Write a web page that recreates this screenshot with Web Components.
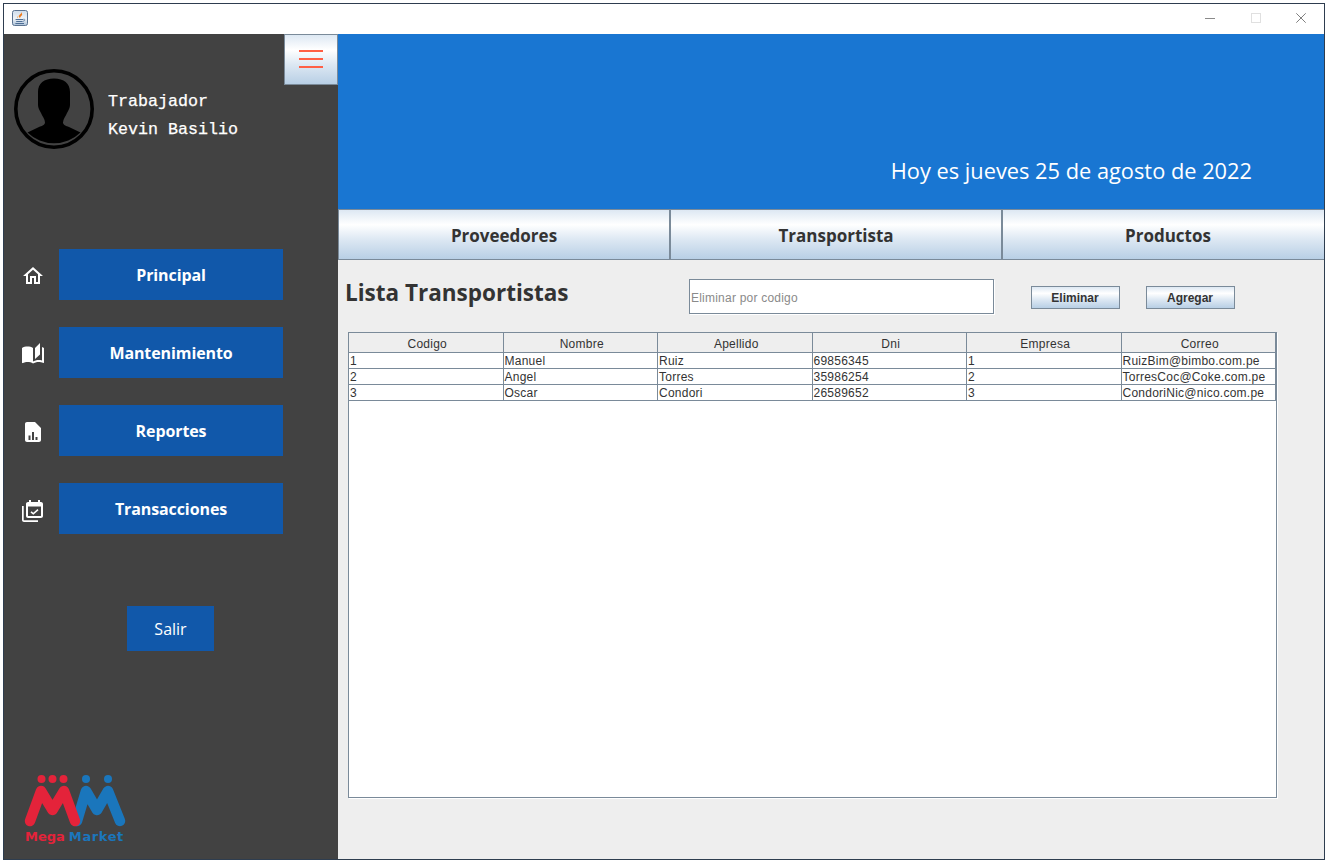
<!DOCTYPE html>
<html lang="es">
<head>
<meta charset="utf-8">
<title>Mega Market</title>
<style>
  html, body { margin: 0; padding: 0; background: #fff; }
  body { padding: 3px 0 0 3px; width: 1325px; height: 860px; box-sizing: border-box; overflow: hidden; }
</style>
</head>
<body>
<app-window>
  <title-bar slot="title"></title-bar>
  <side-bar slot="side">
    <user-profile role-name="Trabajador" user-name="Kevin Basilio"></user-profile>
    <nav-list>
      <nav-item label="Principal" icon="home"></nav-item>
      <nav-item label="Mantenimiento" icon="book"></nav-item>
      <nav-item label="Reportes" icon="report"></nav-item>
      <nav-item label="Transacciones" icon="cal"></nav-item>
    </nav-list>
    <exit-button>Salir</exit-button>
    <brand-logo></brand-logo>
  </side-bar>
  <main-panel slot="main">
    <date-banner>Hoy es jueves 25 de agosto de 2022</date-banner>
    <tab-bar>
      <ocean-button kind="tab">Proveedores</ocean-button>
      <ocean-button kind="tab">Transportista</ocean-button>
      <ocean-button kind="tab">Productos</ocean-button>
    </tab-bar>
    <list-view heading="Lista Transportistas" placeholder="Eliminar por codigo">
      <ocean-button slot="actions" kind="small">Eliminar</ocean-button>
      <ocean-button slot="actions" kind="small">Agregar</ocean-button>
      <data-table slot="table"></data-table>
    </list-view>
  </main-panel>
</app-window>

<script>
const UI = '"Open Sans", "Noto Sans", "Liberation Sans", sans-serif';

function shadow(el, html) {
  el.attachShadow({ mode: 'open' }).innerHTML = html;
}

customElements.define('app-window', class extends HTMLElement {
  constructor() {
    super();
    shadow(this, `<style>
      :host { display: grid; grid-template-columns: 334px 986px; grid-template-rows: 30px 825px;
        width: 1320px; height: 855px; border: 1px solid #2e3d4f; overflow: hidden; background: #fff; }
      .t { grid-column: 1 / -1; display: block; }
    </style>
    <div class="t"><slot name="title"></slot></div>
    <slot name="side"></slot>
    <slot name="main"></slot>`);
  }
});

customElements.define('title-bar', class extends HTMLElement {
  constructor() {
    super();
    shadow(this, `<style>
      :host { display: flex; align-items: center; height: 30px; background: #fff; padding-left: 8px; }
      .spacer { flex: 1; }
      svg { display: block; }
      .java { margin-top: -2px; }
      .ctl { display: flex; margin-right: 18px; margin-top: -2px; }
      .ctl svg + svg { margin-left: 35px; }
      .ctl svg:nth-child(2) { margin-left: 36px; }
    </style>
    <svg class="java" width="16" height="16" viewBox="0 0 16 16">
      <defs><linearGradient id="g" x1="0" y1="0" x2="0" y2="1"><stop offset="0" stop-color="#cfdcea"/><stop offset=".55" stop-color="#eef3f8"/><stop offset="1" stop-color="#a9bfd6"/></linearGradient></defs>
      <rect x=".5" y=".5" width="15" height="15" rx="2" fill="url(#g)" stroke="#5b7390"/>
      <path d="M9.400 1.800c.9 1.900-3.300 3-2.300 5.300.3.7.8 1 1.100 1.300-.5-1.400.9-2.100 1.700-3.100.4-.6.3-1.300-.1-1.600.4.100-.1-1.200-.4-1.900z" fill="#ee7a1c"/>
      <path d="M7 5.500c-1.500.7-2.200 1.500-1.400 2.600.2.200.4.300.6.400-.6-.9-.2-1.800.8-3z" fill="#f09a3e"/>
      <path d="M3.600 9h7.600v1H3.600zM4.200 11h6.400v1H4.200zM3.400 13h8.600v.9H3.400z" fill="#4f6f96"/>
      <path d="M11.400 9.200c2-.4 2 1.800-.4 2" fill="none" stroke="#4f6f96" stroke-width=".8"/>
    </svg>
    <div class="spacer"></div>
    <div class="ctl">
      <svg width="10" height="10" viewBox="0 0 10 10"><path d="M0 5.500h10" stroke="#8a8a8a"/></svg>
      <svg width="10" height="10" viewBox="0 0 10 10"><rect x=".5" y=".5" width="9" height="9" fill="none" stroke="#e0e0e0"/></svg>
      <svg width="10" height="10" viewBox="0 0 10 10"><path d="M.3.3l9.400 9.400M9.700.3L.3 9.700" stroke="#707070" stroke-width=".9" fill="none"/></svg>
    </div>`);
  }
});

customElements.define('side-bar', class extends HTMLElement {
  constructor() {
    super();
    shadow(this, `<style>
      :host { display: flex; flex-direction: column; position: relative; background: #424242; height: 825px; width: 334px; }
      .menu { position: absolute; top: 0; right: 0; }
    </style>
    <ocean-button class="menu" kind="menu"><svg width="24" height="18" viewBox="0 0 24 18" style="display:block;margin-top:-1px"><path d="M0 1h24M0 9h24M0 17h24" stroke="#ff5f45" stroke-width="2"/></svg></ocean-button>
    <slot></slot>`);
  }
});

customElements.define('user-profile', class extends HTMLElement {
  constructor() {
    super();
    const r = this.getAttribute('role-name'), u = this.getAttribute('user-name');
    shadow(this, `<style>
      :host { display: flex; align-items: flex-start; padding: 35px 0 0 10px; color: #fff;
        font: 16.670px/28px "Liberation Mono", monospace; -webkit-text-stroke: .25px #fff; }
      svg { display: block; flex: none; }
      .txt { margin: 19px 0 0 14px; white-space: nowrap; }
      .txt div { height: 28px; }
    </style>
    <svg width="80" height="80" viewBox="0 0 80 80">
      <circle cx="40" cy="40" r="38.200" fill="none" stroke="#000" stroke-width="3.600"/>
      <path d="M40 9.500c-10 0-16 5-16 13.500v13c0 3 1.500 5 3 8c1 3 4 6 4 9.500c0 2.500-3 3.500-6 4.500l-11.500 5.500A38 38 0 0 0 66.500 63.500L55 58c-3-1-6-2-6-4.500c0-3.500 3-6.500 4-9.500c1.500-3 3-5 3-8V23c0-8.500-6-13.500-16-13.500z" fill="#000"/>
    </svg>
    <div class="txt"><div>${r}</div><div>${u}</div></div>`);
  }
});

customElements.define('nav-list', class extends HTMLElement {
  constructor() {
    super();
    shadow(this, `<style>
      :host { display: flex; flex-direction: column; gap: 27px; margin-top: 100px; }
    </style><slot></slot>`);
  }
});

const ICONS = {
  home: `<svg width="24" height="24" viewBox="0 0 24 24" style="margin-top:3px"><path fill="#fff" d="M12 5.690l5 4.500V18h-2v-6H9v6H7v-7.810l5-4.500M12 3L2 12h3v8h6v-6h2v6h6v-8h3L12 3z"/></svg>`,
  book: `<svg width="24" height="24" viewBox="0 0 24 24" style="margin-top:3px"><path fill="#fff" d="M19 1l-5 5v11l5-4.500V1zM1 6v14.650c0 .25.25.5.5.5.1 0 .15-.05.25-.05C3.100 20.450 5.050 20 6.500 20c1.950 0 4.050.4 5.500 1.500V6c-1.450-1.100-3.550-1.500-5.500-1.500S2.450 4.900 1 6zm22 13.500V6c-.6-.45-1.250-.75-2-1v13.500c-1.100-.35-2.300-.5-3.500-.5-1.700 0-4.150.65-5.500 1.500v2c1.350-.85 3.800-1.500 5.500-1.500 1.650 0 3.350.3 4.750 1.050.1.05.15.05.25.05.25 0 .5-.25.5-.5v-1.100z"/></svg>`,
  report: `<svg width="24" height="24" viewBox="0 0 24 24" style="margin-top:3px"><path fill="#fff" fill-rule="evenodd" d="M6 2h8l6 6v12c0 1.100-.9 2-2 2H6c-1.100 0-2-.9-2-2V4c0-1.100.9-2 2-2zm1.500 13.500v4.500h2v-4.500zm3.500-3.500v8h2v-8zm3.500 5v3h2v-3z"/></svg>`,
  cal: `<svg width="24" height="24" viewBox="0 0 24 24" style="margin-top:5px"><path fill="#fff" fill-rule="evenodd" d="M8 1h2v2h7V1h2v2h1c1.100 0 2 .9 2 2v12c0 1.100-.9 2-2 2H7c-1.100 0-2-.9-2-2V5c0-1.100.9-2 2-2h1zM7 7.500v9.500h13V7.500zM1 7h1.700v14.300H17V23H3c-1.100 0-2-.9-2-2z"/><path fill="none" stroke="#fff" stroke-width="1.600" d="M10 12.800l2.300 2 4.700-4.200"/></svg>`
};

customElements.define('nav-item', class extends HTMLElement {
  constructor() {
    super();
    shadow(this, `<style>
      :host { display: flex; align-items: stretch; height: 51px; padding-left: 17px; }
      .ic { width: 38px; display: flex; align-items: center; }
      svg { display: block; }
      .b { width: 224px; background: #1158aa; color: #fff; display: flex; align-items: center; justify-content: center;
        font: 700 16px ${UI}; letter-spacing: -.1px; }
    </style>
    <div class="ic">${ICONS[this.getAttribute('icon')]}</div>
    <div class="b">${this.getAttribute('label')}</div>`);
  }
});

customElements.define('exit-button', class extends HTMLElement {
  constructor() {
    super();
    shadow(this, `<style>
      :host { display: flex; align-items: center; justify-content: center; align-self: flex-start; width: 87px; height: 45px;
        margin: 72px 0 0 123px; background: #1158aa; color: #fff; font: 400 16px ${UI}; }
    </style><slot></slot>`);
  }
});

customElements.define('brand-logo', class extends HTMLElement {
  constructor() {
    super();
    shadow(this, `<style>
      :host { display: block; width: 130px; height: 90px; margin: auto 0 9px 6px; }
      svg { display: block; }
      .t { display: flex; gap: 4px; margin: 0 0 0 15px; width: 112px; white-space: nowrap;
        font: 700 13px/14px "DejaVu Sans", sans-serif; }
      .r { color: #e4233a; } .b { color: #1a76bc; letter-spacing: .6px; }
    </style>
    <svg width="130" height="70" viewBox="0 0 130 70">
      <g fill="none" stroke-width="10.500" stroke-linecap="round" stroke-linejoin="round">
        <path stroke="#1a76bc" d="M67 61L76 31L87 50L98 31L110 61"/>
        <path stroke="#e4233a" d="M20 61L31 31L42.500 50L54 31L65 61"/>
      </g>
      <g fill="#e4233a"><circle cx="31.500" cy="19" r="4"/><circle cx="42.500" cy="19" r="4"/><circle cx="53.500" cy="19" r="4"/></g>
      <g fill="#1a76bc"><circle cx="76" cy="19" r="4"/><circle cx="98" cy="19" r="4"/></g>
    </svg>
    <div class="t"><span class="r">Mega</span><span class="b">Market</span></div>`);
  }
});

customElements.define('main-panel', class extends HTMLElement {
  constructor() {
    super();
    shadow(this, `<style>
      :host { display: flex; flex-direction: column; height: 825px; width: 986px; background: #eee; }
    </style><slot></slot>`);
  }
});

customElements.define('date-banner', class extends HTMLElement {
  constructor() {
    super();
    shadow(this, `<style>
      :host { display: flex; justify-content: flex-end; align-items: flex-end; box-sizing: border-box; height: 175px;
        background: #1976d2; color: #fff; padding: 0 72px 23px 0; font: 400 21.800px/30px ${UI}; white-space: nowrap; }
    </style><slot></slot>`);
  }
});

customElements.define('tab-bar', class extends HTMLElement {
  constructor() {
    super();
    shadow(this, `<style>
      :host { display: grid; grid-template-columns: 332px 332px 332px; height: 51px; overflow: hidden; }
    </style><slot></slot>`);
  }
});

customElements.define('ocean-button', class extends HTMLElement {
  constructor() {
    super();
    const k = this.getAttribute('kind');
    const size = {
      tab: `font: 700 17px ${UI}; padding-top: 1px;`,
      small: `width: 89px; height: 23px; font: 700 12px "Liberation Sans", sans-serif; padding-right: 1px;`,
      menu: `width: 54px; height: 51px;`
    }[k];
    shadow(this, `<style>
      :host { display: flex; align-items: center; justify-content: center; box-sizing: border-box; color: #333;
        border: 1px solid #7a8a99; ${size}
        background: linear-gradient(#dde8f3 0%, #fff 30%, #dde8f3 60%, #b8cfe5 100%); white-space: nowrap; }
    </style><slot></slot>`);
  }
});

customElements.define('list-view', class extends HTMLElement {
  constructor() {
    super();
    shadow(this, `<style>
      :host { display: block; padding: 19px 0 0 7px; }
      .bar { display: flex; align-items: flex-start; height: 35px; }
      h1 { width: 344px; margin: 0; color: #333; font: 700 22.500px/28px ${UI}; white-space: nowrap; }
      .field { box-sizing: border-box; width: 305px; height: 35px; border: 1px solid #7a8a99; box-shadow: 1px 1px 0 #fff;
        background: #fff; color: #8a8a8a; font: 12px "Liberation Sans", sans-serif; letter-spacing: .22px;
        padding: 3px 0 0 1px; display: flex; align-items: center; }
      .acts { display: flex; gap: 26px; margin: 7px 0 0 37px; }
      .tbl { margin: 18px 0 0 3px; }
    </style>
    <div class="bar">
      <h1>${this.getAttribute('heading')}</h1>
      <div class="field">${this.getAttribute('placeholder')}</div>
      <div class="acts"><slot name="actions"></slot></div>
    </div>
    <div class="tbl"><slot name="table"></slot></div>`);
  }
});

customElements.define('data-table', class extends HTMLElement {
  constructor() {
    super();
    const head = ['Codigo','Nombre','Apellido','Dni','Empresa','Correo'];
    const rows = [
      ['1','Manuel','Ruiz','69856345','1','RuizBim@bimbo.com.pe'],
      ['2','Angel','Torres','35986254','2','TorresCoc@Coke.com.pe'],
      ['3','Oscar','Condori','26589652','3','CondoriNic@nico.com.pe']
    ];
    const hc = head.map(h => `<div class="h">${h}</div>`).join('');
    const rc = rows.map(r => r.map(c => `<div class="c">${c}</div>`).join('')).join('');
    shadow(this, `<style>
      :host { display: block; box-sizing: border-box; width: 929px; height: 466px; border: 1px solid #7a8a99;
        box-shadow: 1px 1px 0 #fff; background: #fff; color: #333; font: 12px "Liberation Sans", sans-serif; letter-spacing: .25px; }
      .g { display: grid; grid-template-columns: repeat(6, 154.500px); grid-template-rows: 20px; grid-auto-rows: 16px; }
      .h, .c { box-sizing: border-box; border-right: 1px solid #7a8a99; border-bottom: 1px solid #7a8a99; white-space: nowrap; overflow: hidden; }
      .h { background: #eee; text-align: center; line-height: 22px; padding-left: 3px; }
      .c { padding-left: 1px; line-height: 17px; }
    </style><div class="g">${hc}${rc}</div>`);
  }
});
</script>
</body>
</html>
